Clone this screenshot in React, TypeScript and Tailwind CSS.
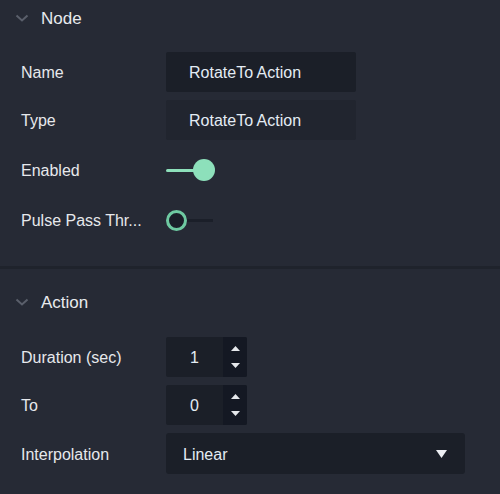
import React from "react";

const font = { fontFamily: '"Liberation Sans", Arial, sans-serif' };

function Chevron() {
  return (
    <svg width="14" height="8" viewBox="0 0 14 8" className="ml-[15px] mr-[12px]">
      <path d="M1.5 1.5 L7 6.5 L12.5 1.5" fill="none" stroke="#5a5f6b" strokeWidth="2" />
    </svg>
  );
}

function Header({ title }: { title: string }) {
  return (
    <div className="flex items-center h-9">
      <Chevron />
      <span className="text-[17px] text-[#e8eaee] pt-[2px]">{title}</span>
    </div>
  );
}

function Row({ label, children, cls = "h-10" }: { label: string; children: React.ReactNode; cls?: string }) {
  return (
    <div className={`flex items-center ${cls}`}>
      <div className="w-[166px] pl-[21px] text-[16px] text-[#e6e8ec] pt-[2px]">{label}</div>
      {children}
    </div>
  );
}

function TextBox({ value, bg }: { value: string; bg: string }) {
  return (
    <div className={`w-[190px] h-10 flex items-center pl-[23px] pt-[2px] text-[16px] text-[#e4ecf4] rounded-[2px] ${bg}`}>{value}</div>
  );
}

function Spin({ value }: { value: string }) {
  return (
    <div className="flex h-10 w-[81px] rounded-[2px] overflow-hidden bg-[#1b1f28]">
      <div className="flex-1 flex items-center justify-center pt-[2px] text-[16px] text-[#e4ecf4]">{value}</div>
      <div className="w-[24px] bg-[#141823] flex flex-col items-center justify-center gap-[12px]">
        <svg width="9" height="5" viewBox="0 0 9 5"><path d="M0 5 L4.5 0 L9 5 Z" fill="#e6e8ec" /></svg>
        <svg width="9" height="5" viewBox="0 0 9 5"><path d="M0 0 L4.5 5 L9 0 Z" fill="#e6e8ec" /></svg>
      </div>
    </div>
  );
}

export default function App() {
  return (
    <div className="w-[500px] h-[494px] bg-[#262a35] overflow-hidden" style={font}>
      <div className="pb-[26px]">
        <Header title="Node" />
        <div className="flex flex-col">
          <Row label="Name" cls="h-10 mt-4"><TextBox value="RotateTo Action" bg="bg-[#1b1f28]" /></Row>
          <Row label="Type" cls="h-10 mt-2"><TextBox value="RotateTo Action" bg="bg-[#21252f]" /></Row>
          <Row label="Enabled" cls="h-10 mt-[10px]">
            <div className="flex items-center">
              <div className="w-[28px] h-[3px] bg-[#8de0bb] rounded-l-full -mr-[1px]" />
              <div className="w-[22px] h-[22px] rounded-full bg-[#8de0bb]" />
            </div>
          </Row>
          <Row label="Pulse Pass Thr..." cls="h-10 mt-[10px]">
            <div className="flex items-center">
              <div className="w-[21px] h-[21px] rounded-full border-[3px] border-[#6ec9a1] bg-[#1a1e28]" />
              <div className="w-[26px] h-[3px] bg-[#1b1f29]" />
            </div>
          </Row>
        </div>
      </div>
      <div className="h-[3px] bg-[#1f232c]" />
      <div className="pt-[15px]">
        <Header title="Action" />
        <div className="flex flex-col">
          <Row label="Duration (sec)" cls="h-10 mt-[17px]"><Spin value="1" /></Row>
          <Row label="To" cls="h-10 mt-2"><Spin value="0" /></Row>
          <Row label="Interpolation" cls="h-[41px] mt-2">
            <div className="w-[299px] h-[41px] rounded-[3px] bg-[#1b1f28] flex items-center justify-between pl-[17px] pr-[18px]">
              <span className="text-[16px] text-[#e4ecf4] pt-[2px]">Linear</span>
              <svg width="11" height="8" viewBox="0 0 11 8"><path d="M0 0 L11 0 L5.5 8 Z" fill="#eceef2" /></svg>
            </div>
          </Row>
        </div>
      </div>
    </div>
  );
}
